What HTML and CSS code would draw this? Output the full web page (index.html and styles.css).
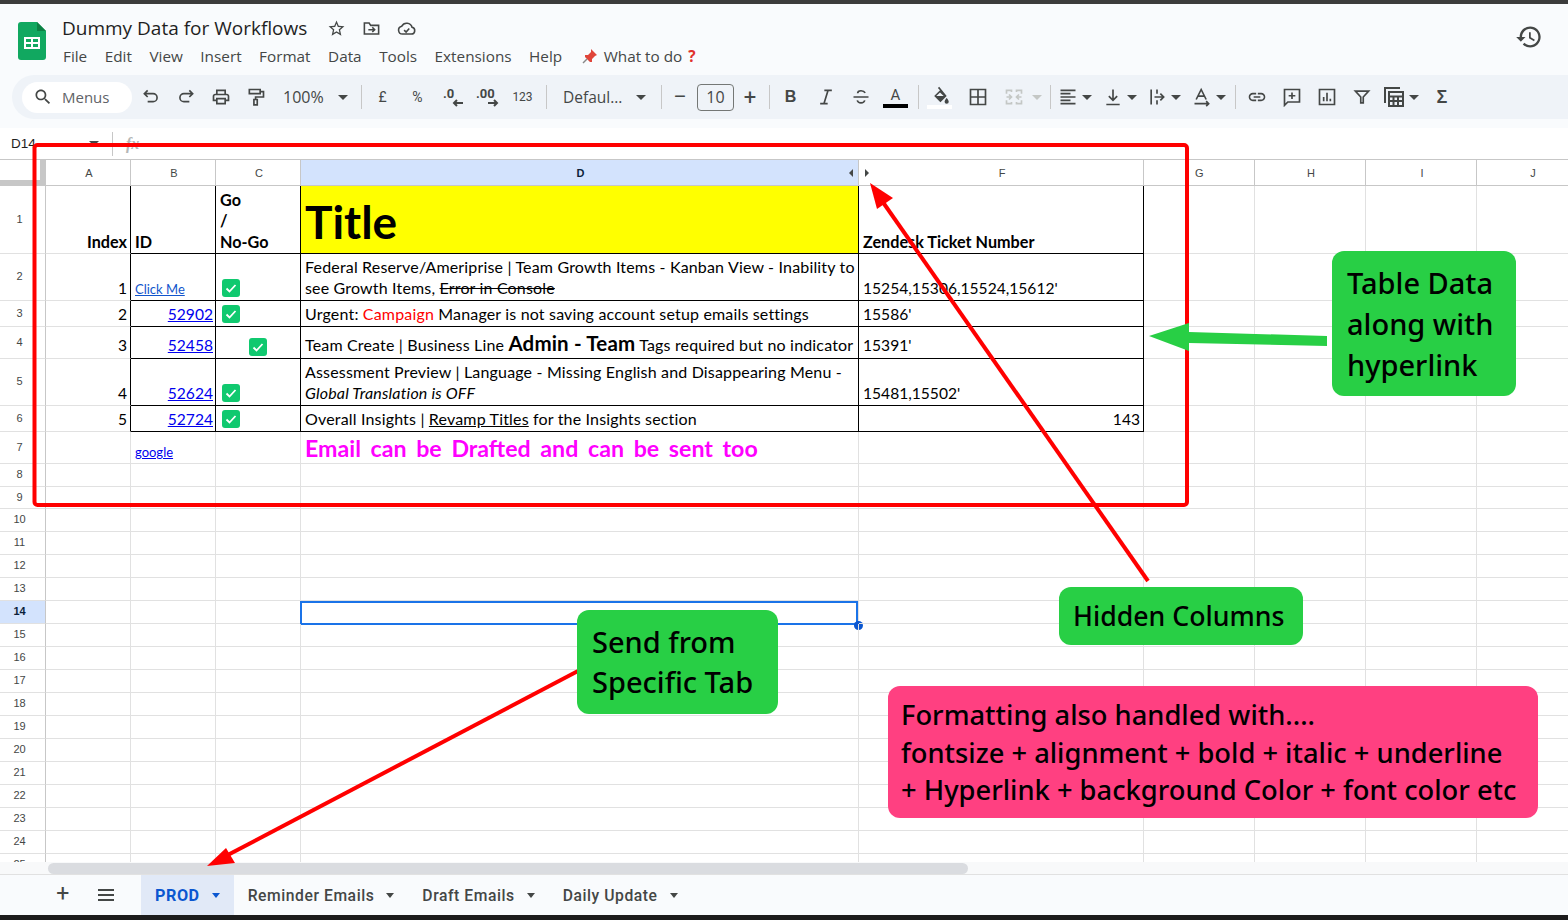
FILE: index.html
```html
<!DOCTYPE html>
<html lang="en">
<head>
    <meta charset="UTF-8">
    <title>Dummy Data for Workflows</title>
    <link rel="stylesheet" href="styles.css">
</head>
<body>
<div class="page">
    <div class="topband"></div>

    <header class="docbar">
        <svg class="logo" viewBox="0 0 28 38"><path d="M3 0h16l9 9v26a3 3 0 0 1-3 3H3a3 3 0 0 1-3-3V3a3 3 0 0 1 3-3z" fill="#11a860"/><path d="M19 0l9 9h-9z" fill="#0c8043"/><path d="M6 15h16v12H6zM8 17v3h5v-3zM15 17v3h5v-3zM8 22v3h5v-3zM15 22v3h5v-3z" fill="#fff" fill-rule="evenodd"/></svg>
        <div class="docinfo">
            <div class="docname">
                <span class="title">Dummy Data for Workflows</span>
                <svg class="ic16 star" viewBox="0 0 24 24"><path d="M22 9.24l-7.19-.62L12 2 9.19 8.63 2 9.24l5.46 4.73L5.82 21 12 17.27 18.18 21l-1.63-7.03L22 9.24zM12 15.4l-3.76 2.27 1-4.28-3.32-2.88 4.38-.38L12 6.1l1.71 4.04 4.38.38-3.32 2.88 1 4.28L12 15.4z"/></svg>
                <svg class="ic16 line" viewBox="0 0 24 24"><path d="M3 19V5h6l2 3h10v11zM8 13.5h8M13 10.5l3 3-3 3"/></svg>
                <svg class="ic16 line" viewBox="0 0 24 24"><path d="M7 19a5 5 0 0 1-1-9.9 7 7 0 0 1 13 1.4 4.3 4.3 0 0 1-1 8.5zM9 14l2.5 2.5L15.5 12"/></svg>
            </div>
            <nav class="menus">
                <span>File</span><span>Edit</span><span>View</span><span>Insert</span><span>Format</span><span>Data</span><span>Tools</span><span>Extensions</span><span>Help</span>
                <span class="todo"><svg class="pin" viewBox="0 0 16 16"><path d="M9 1l6 6-2 1-3 3 0 3-2 0-5-5 0-2 3 0 3-3z" fill="#e0453a"/><path d="M5 11l-4 4" stroke="#888" stroke-width="1.5"/></svg>What to do <b class="qmark">?</b></span>
            </nav>
        </div>
        <svg class="history" viewBox="0 0 24 24"><path d="M13 3c-4.97 0-9 4.03-9 9H1l3.89 3.89.07.14L9 12H6c0-3.87 3.13-7 7-7s7 3.13 7 7-3.13 7-7 7c-1.93 0-3.68-.79-4.94-2.06l-1.42 1.42C8.27 19.99 10.51 21 13 21c4.97 0 9-4.03 9-9s-4.03-9-9-9zm-1 5v5l4.28 2.54.72-1.21-3.5-2.08V8H12z"/></svg>
    </header>

    <div class="toolbar">
        <div class="search">
            <svg class="ic20 fill" viewBox="0 0 24 24"><path d="M15.5 14h-.79l-.28-.27C15.41 12.59 16 11.11 16 9.5 16 5.91 13.09 3 9.5 3S3 5.91 3 9.5 5.91 16 9.5 16c1.61 0 3.09-.59 4.23-1.57l.27.28v.79l5 4.99L20.49 19l-4.99-5zm-6 0C7.01 14 5 11.99 5 9.5S7.01 5 9.5 5 14 7.01 14 9.5 11.99 14 9.5 14z"/></svg>
            <span>Menus</span>
        </div>
        <span class="tool first"><svg class="ic20 line" viewBox="0 0 24 24"><path d="M8 4L4 8l4 4M4 8h10.5a4.8 4.8 0 0 1 0 9.6H8"/></svg></span>
        <span class="tool"><svg class="ic20 line" viewBox="0 0 24 24"><path d="M16 4l4 4-4 4M20 8H9.5a4.8 4.8 0 0 0 0 9.6H16"/></svg></span>
        <span class="tool"><svg class="ic20 fill" viewBox="0 0 24 24"><path d="M19 8h-1V3H6v5H5c-1.66 0-3 1.34-3 3v6h4v4h12v-4h4v-6c0-1.66-1.34-3-3-3zM8 5h8v3H8V5zm8 12v2H8v-4h8v2zm2-2v-2H6v2H4v-4c0-.55.45-1 1-1h14c.55 0 1 .45 1 1v4h-2z"/></svg></span>
        <span class="tool"><svg class="ic20 line" viewBox="0 0 24 24"><path d="M4 3h13v5H4zM17 5.5h4V12h-9.5v3M9.5 15h4v6.5h-4z"/></svg></span>
        <span class="tool zoomval">100%</span>
        <i class="caret wide"></i>
        <i class="sep"></i>
        <span class="tool txt">£</span>
        <span class="tool txt">%</span>
        <span class="tool"><svg class="ic22" viewBox="0 0 24 24"><text x="2" y="13" class="dec">.0</text><path class="arr" d="M22 18H13M16 15l-3 3 3 3"/></svg></span>
        <span class="tool"><svg class="ic22" viewBox="0 0 24 24"><text x="0" y="13" class="dec">.00</text><path class="arr" d="M12 18h9M18 15l3 3-3 3"/></svg></span>
        <span class="tool txt small">123</span>
        <i class="sep"></i>
        <span class="fontname">Defaul...</span>
        <i class="caret wide more"></i>
        <i class="sep"></i>
        <span class="tool pm">&#8211;</span>
        <span class="sizebox">10</span>
        <span class="tool pm plus">+</span>
        <i class="sep"></i>
        <span class="tool tb-bold">B</span>
        <span class="tool"><svg class="ic20 line" viewBox="0 0 24 24"><path d="M10 4h9M5 20h9M14.5 4l-5 16"/></svg></span>
        <span class="tool"><svg class="ic20 line" viewBox="0 0 24 24"><path d="M3 12h18M17 7c-1-2-3-2.5-5-2.5S8 5.5 8 7.5M7.5 16c.5 2 2.5 3 4.5 3s4-1 4.5-3"/></svg></span>
        <span class="tool colorbtn textcolor">A<i class="bar black"></i></span>
        <i class="sep"></i>
        <span class="tool colorbtn fillbtn"><svg class="ic20 fill" viewBox="0 0 24 24"><path d="M11 1L9.5 2.5 12 5l-7 7 7.500 7.500L20 12zM12 7.8L16.500 12h-9zM20 14.500s-2.500 2.700-2.500 4.300a2.500 2.500 0 0 0 5 0c0-1.600-2.500-4.300-2.500-4.300z"/></svg><i class="bar white"></i></span>
        <span class="tool"><svg class="ic20 line" viewBox="0 0 24 24"><path d="M3 3h18v18H3zM12 3v18M3 12h18"/></svg></span>
        <span class="tool merge"><svg class="ic20 line off" viewBox="0 0 24 24"><path d="M3 8V4h6v2M15 6V4h6v4M3 16v4h6v-2M15 18v2h6v-4M3 12h6M6 9l3 3-3 3M21 12h-6M18 9l-3 3 3 3"/></svg></span>
        <i class="caret off"></i>
        <i class="sep"></i>
        <span class="tool tight"><svg class="ic20 line" viewBox="0 0 24 24"><path d="M3 4h18M3 8h12M3 12h18M3 16h12M3 20h18"/></svg></span>
        <i class="caret"></i>
        <span class="tool tight"><svg class="ic20 line" viewBox="0 0 24 24"><path d="M12 3v13M7 11l5 5 5-5M4 21h16"/></svg></span>
        <i class="caret"></i>
        <span class="tool tight"><svg class="ic20 line" viewBox="0 0 24 24"><path d="M5 3v18M12 3v5M12 16v5M9 12h11M16 8l4 4-4 4"/></svg></span>
        <i class="caret"></i>
        <span class="tool tight"><svg class="ic20 line" viewBox="0 0 24 24"><path d="M5 15L11 3l6 12M7.5 11h7M3 20h16M17 17l3 3-3 3"/></svg></span>
        <i class="caret"></i>
        <i class="sep"></i>
        <span class="tool"><svg class="ic20 fill" viewBox="0 0 24 24"><path d="M3.9 12c0-1.71 1.39-3.1 3.1-3.1h4V7H7c-2.76 0-5 2.24-5 5s2.24 5 5 5h4v-1.9H7c-1.71 0-3.1-1.39-3.1-3.1zM8 13h8v-2H8v2zm9-6h-4v1.9h4c1.71 0 3.1 1.39 3.1 3.1s-1.39 3.1-3.1 3.1h-4V17h4c2.76 0 5-2.24 5-5s-2.24-5-5-5z"/></svg></span>
        <span class="tool"><svg class="ic20 line" viewBox="0 0 24 24"><path d="M3 3h18v15H7l-4 4zM12 6.5v8M8 10.5h8"/></svg></span>
        <span class="tool"><svg class="ic20 line" viewBox="0 0 24 24"><path d="M3 3h18v18H3zM8 17v-5M12 17V7M16 17v-3"/></svg></span>
        <span class="tool"><svg class="ic20 line" viewBox="0 0 24 24"><path d="M4 5h16l-6.5 7v7h-3v-7z"/></svg></span>
        <span class="tool calc"><svg class="ic22 line" viewBox="0 0 24 24"><path d="M3 18V3h15M7 7h14v14H7zM7 11.5h14M7 16h14M11.5 11.5V21M16 11.5V21"/></svg></span>
        <i class="caret"></i>
        <span class="tool sigma">&#931;</span>
    </div>

    <div class="formula">
        <span class="cellref">D14</span>
        <i class="caret"></i>
        <i class="sep"></i>
        <span class="fx">fx</span>
    </div>

    <div class="sheet">
        <table class="grid">
            <colgroup><col class="c-row"><col class="c-a"><col class="c-a"><col class="c-a"><col class="c-d"><col class="c-f"><col class="c-g"><col class="c-g"><col class="c-g"><col class="c-g"></colgroup>
            <tr class="heads">
                <th class="corner"></th><th>A</th><th>B</th><th>C</th>
                <th class="active">D<i class="hid left"></i></th>
                <th>F<i class="hid right"></i></th>
                <th class="gcol">G</th><th>H</th><th>I</th><th>J</th>
            </tr>
            <tr class="h68">
                <th>1</th>
                <td class="blk-r num head">Index</td>
                <td class="blk head">ID</td>
                <td class="blk head">Go<br>/<br>No-Go</td>
                <td class="blk yellow"><span class="bigtitle">Title</span></td>
                <td class="blk head">Zendesk Ticket Number</td>
                <td></td><td></td><td></td><td></td>
            </tr>
            <tr class="h47">
                <th>2</th>
                <td class="blk-r num">1</td>
                <td class="blk"><a class="smalllink" href="#">Click Me</a></td>
                <td class="blk chk"><svg class="check" viewBox="0 0 18 18"><rect width="18" height="18" rx="3"/><path d="M4.5 9.5l3 3 6-6.5"/></svg></td>
                <td class="blk desc">Federal Reserve/Ameriprise | Team Growth Items - Kanban View - Inability to<br>see Growth Items, <s>Error in Console</s></td>
                <td class="blk">15254,15306,15524,15612'</td>
                <td></td><td></td><td></td><td></td>
            </tr>
            <tr class="h26">
                <th>3</th>
                <td class="blk-r num">2</td>
                <td class="blk num"><a href="#">52902</a></td>
                <td class="blk chk"><svg class="check" viewBox="0 0 18 18"><rect width="18" height="18" rx="3"/><path d="M4.5 9.5l3 3 6-6.5"/></svg></td>
                <td class="blk desc">Urgent: <span class="red">Campaign</span> Manager is not saving account setup emails settings</td>
                <td class="blk">15586'</td>
                <td></td><td></td><td></td><td></td>
            </tr>
            <tr class="h32 raised">
                <th>4</th>
                <td class="blk-r num">3</td>
                <td class="blk num"><a href="#">52458</a></td>
                <td class="blk chk mid"><svg class="check" viewBox="0 0 18 18"><rect width="18" height="18" rx="3"/><path d="M4.5 9.5l3 3 6-6.5"/></svg></td>
                <td class="blk desc">Team Create | Business Line <b class="admin">Admin - Team</b> Tags required but no indicator</td>
                <td class="blk">15391'</td>
                <td></td><td></td><td></td><td></td>
            </tr>
            <tr class="h47">
                <th>5</th>
                <td class="blk-r num">4</td>
                <td class="blk num"><a href="#">52624</a></td>
                <td class="blk chk"><svg class="check" viewBox="0 0 18 18"><rect width="18" height="18" rx="3"/><path d="M4.5 9.5l3 3 6-6.5"/></svg></td>
                <td class="blk desc">Assessment Preview | Language - Missing English and Disappearing Menu -<br><em>Global Translation is OFF</em></td>
                <td class="blk">15481,15502'</td>
                <td></td><td></td><td></td><td></td>
            </tr>
            <tr class="h26">
                <th>6</th>
                <td class="blk-r num">5</td>
                <td class="blk num"><a href="#">52724</a></td>
                <td class="blk chk"><svg class="check" viewBox="0 0 18 18"><rect width="18" height="18" rx="3"/><path d="M4.5 9.5l3 3 6-6.5"/></svg></td>
                <td class="blk desc">Overall Insights | <u>Revamp Titles</u> for the Insights section</td>
                <td class="blk num">143</td>
                <td></td><td></td><td></td><td></td>
            </tr>
            <tr class="h32">
                <th>7</th><td></td>
                <td><a class="smalllink dark" href="#">google</a></td>
                <td></td>
                <td><span class="email">Email can be Drafted and can be sent too</span></td>
                <td></td><td></td><td></td><td></td><td></td>
            </tr>
            <tr><th>8</th><td></td><td></td><td></td><td></td><td></td><td></td><td></td><td></td><td></td></tr>
            <tr class="h22"><th>9</th><td></td><td></td><td></td><td></td><td></td><td></td><td></td><td></td><td></td></tr>
            <tr><th>10</th><td></td><td></td><td></td><td></td><td></td><td></td><td></td><td></td><td></td></tr>
            <tr><th>11</th><td></td><td></td><td></td><td></td><td></td><td></td><td></td><td></td><td></td></tr>
            <tr><th>12</th><td></td><td></td><td></td><td></td><td></td><td></td><td></td><td></td><td></td></tr>
            <tr><th>13</th><td></td><td></td><td></td><td></td><td></td><td></td><td></td><td></td><td></td></tr>
            <tr><th class="active">14</th><td></td><td></td><td></td><td class="selected"><i class="selbox"></i><i class="handle"></i></td><td></td><td></td><td></td><td></td><td></td></tr>
            <tr><th>15</th><td></td><td></td><td></td><td></td><td></td><td></td><td></td><td></td><td></td></tr>
            <tr><th>16</th><td></td><td></td><td></td><td></td><td></td><td></td><td></td><td></td><td></td></tr>
            <tr><th>17</th><td></td><td></td><td></td><td></td><td></td><td></td><td></td><td></td><td></td></tr>
            <tr><th>18</th><td></td><td></td><td></td><td></td><td></td><td></td><td></td><td></td><td></td></tr>
            <tr><th>19</th><td></td><td></td><td></td><td></td><td></td><td></td><td></td><td></td><td></td></tr>
            <tr><th>20</th><td></td><td></td><td></td><td></td><td></td><td></td><td></td><td></td><td></td></tr>
            <tr><th>21</th><td></td><td></td><td></td><td></td><td></td><td></td><td></td><td></td><td></td></tr>
            <tr><th>22</th><td></td><td></td><td></td><td></td><td></td><td></td><td></td><td></td><td></td></tr>
            <tr><th>23</th><td></td><td></td><td></td><td></td><td></td><td></td><td></td><td></td><td></td></tr>
            <tr><th>24</th><td></td><td></td><td></td><td></td><td></td><td></td><td></td><td></td><td></td></tr>
            <tr><th>25</th><td></td><td></td><td></td><td></td><td></td><td></td><td></td><td></td><td></td></tr>
        </table>
    </div>

    <div class="hscroll"><div class="thumb"></div></div>

    <div class="tabs">
        <span class="addsheet">+</span>
        <svg class="allsheets" viewBox="0 0 16 12"><path d="M0 1h16M0 6h16M0 11h16"/></svg>
        <div class="tab current">PROD<i class="caret"></i></div>
        <div class="tab">Reminder Emails<i class="caret"></i></div>
        <div class="tab">Draft Emails<i class="caret"></i></div>
        <div class="tab">Daily Update<i class="caret"></i></div>
    </div>
    <div class="bottomband"></div>

    <!-- annotations drawn on top of the screenshot -->
    <svg class="marks" viewBox="0 0 1568 920">
        <rect x="34.5" y="145" width="1152.5" height="360" rx="3" fill="none" stroke="#ff0000" stroke-width="4"/>
        <path d="M1148 581L880 198" stroke="#ff0000" stroke-width="4" fill="none"/>
        <polygon points="870,183 893,198 877,209" fill="#ff0000"/>
        <path d="M578 671L222 858" stroke="#ff0000" stroke-width="4" fill="none"/>
        <polygon points="207,866 226,848 235,863" fill="#ff0000"/>
        <polygon points="1149,336 1189,323 1189,332 1327,336 1327,346 1189,343 1189,351" fill="#28cf45"/>
    </svg>
    <div class="note green note-table">Table Data<br>along with<br>hyperlink</div>
    <div class="note green note-hidden">Hidden Columns</div>
    <div class="note green note-send">Send from<br>Specific Tab</div>
    <div class="note pink note-format">Formatting also handled with....<br>fontsize + alignment + bold + italic + underline<br>+ Hyperlink + background Color + font color etc</div>
</div>
</body>
</html>
```
FILE: styles.css
```css
* {
    box-sizing: border-box;
}

body {
    margin: 0;
    background: #fff;
    font-family: "Roboto", sans-serif;
    color: #444746;
}

.page {
    position: relative;
    width: 1568px;
    height: 920px;
    overflow: hidden;
    display: flex;
    flex-direction: column;
    background: #f9fbfd;
}

.topband {
    height: 4px;
    background: #3c3c3c;
}

/* title and menus */
.docbar {
    height: 71px;
    display: flex;
    padding: 10px 25px 0 18px;
}

.logo {
    width: 28px;
    height: 38px;
    margin-top: 8px;
}

.docinfo {
    flex: 1;
    margin-left: 16px;
}

.docname {
    display: flex;
    align-items: center;
    height: 28px;
}

.title {
    font-family: "Open Sans", sans-serif;
    font-size: 19px;
    color: #1f1f1f;
    margin-right: 20px;
}

.ic16 {
    width: 19px;
    height: 19px;
    margin-right: 16px;
}

.star {
    fill: #444746;
}

.line {
    fill: none;
    stroke: #444746;
    stroke-width: 2;
}

.fill {
    fill: #444746;
}

.menus {
    display: flex;
    gap: 17.5px;
    margin-top: 4px;
    margin-left: 1px;
    color: #444746;
    font-family: "Open Sans", sans-serif;
    font-size: 15.3px;
}

.todo {
    display: flex;
    align-items: center;
    margin-left: 2px;
}

.pin {
    width: 16px;
    height: 16px;
    margin-right: 6px;
}

.qmark {
    color: #e0322b;
    margin-left: 6px;
}

.history {
    width: 28px;
    height: 28px;
    fill: #444746;
    margin-top: 9px;
}

/* toolbar */
.toolbar {
    height: 44px;
    margin-left: 12px;
    padding-left: 10px;
    display: flex;
    align-items: center;
    background: #eff3f8;
    border-radius: 22px 0 0 22px;
}

.search {
    width: 110px;
    height: 31px;
    flex: none;
    display: flex;
    align-items: center;
    gap: 9px;
    padding-left: 11px;
    background: #fff;
    border-radius: 16px;
    font-family: "Open Sans", sans-serif;
    font-size: 15px;
    color: #5f6368;
}

.tool {
    width: 35px;
    height: 30px;
    flex: none;
    display: flex;
    align-items: center;
    justify-content: center;
    position: relative;
}

.tool.first {
    margin-left: 1.5px;
}

.tool.tight {
    width: 28px;
}

.tool.calc {
    width: 30px;
}

.tool.merge {
    margin-left: 1px;
}

.ic20 {
    width: 20px;
    height: 20px;
}

.ic22 {
    width: 24px;
    height: 24px;
}

.dec {
    font: 700 13px "Roboto", sans-serif;
    fill: #444746;
}

.arr {
    fill: none;
    stroke: #444746;
    stroke-width: 2;
}

.tool.zoomval {
    width: 64px;
    justify-content: flex-start;
    padding-left: 9.5px;
    font-family: "Open Sans", sans-serif;
    font-size: 16px;
}

.txt {
    font-size: 14px;
}

.tool.small {
    font-size: 12px;
    margin-right: 3px;
}

.caret {
    width: 0;
    height: 0;
    flex: none;
    border-left: 5px solid transparent;
    border-right: 5px solid transparent;
    border-top: 5px solid #444746;
}

.caret.wide {
    margin-right: 10.5px;
}

.caret.more {
    margin-right: 12px;
}

.caret.off {
    border-top-color: #c4c7c5;
    margin: 0 5px 0 1px;
}

.tight + .caret {
    margin-right: 6.5px;
}

.sep {
    width: 1px;
    height: 24px;
    flex: none;
    background: #c7c7c7;
    margin: 0 3px;
}

.fontname {
    width: 73px;
    margin-left: 13px;
    flex: none;
    font-family: "Open Sans", sans-serif;
    font-size: 15.5px;
    white-space: nowrap;
}

.tool.pm {
    width: 30px;
    font-size: 20px;
}

.tool.plus {
    width: 32px;
    font-size: 22px;
}

.sizebox {
    width: 37px;
    height: 27px;
    flex: none;
    display: flex;
    align-items: center;
    justify-content: center;
    margin-left: 2px;
    border: 1px solid #747775;
    border-radius: 4px;
    font-family: "Open Sans", sans-serif;
    font-size: 16px;
}

.tb-bold {
    font: 700 16px "Liberation Sans", sans-serif;
}

.colorbtn {
    flex-direction: column;
    font-size: 15px;
    line-height: 17px;
}

.textcolor {
    margin-right: 2px;
}

.bar {
    width: 25px;
    height: 4px;
    display: block;
}

.bar.black {
    background: #000;
}

.bar.white {
    background: #fff;
}

.fillbtn {
    margin-right: 3px;
}

.fillbtn .ic20 {
    margin-bottom: -1px;
}

.line.off {
    stroke: #c4c7c5;
}

.tool.sigma {
    font: 700 18px "Liberation Sans", sans-serif;
    width: 26px;
    margin-left: 10px;
}

/* formula bar */
.formula {
    height: 32px;
    margin-top: 9px;
    padding-left: 11px;
    display: flex;
    align-items: center;
    background: #fff;
    font-family: "Liberation Sans", sans-serif;
    font-size: 13.5px;
    color: #1f1f1f;
    border-bottom: 1px solid #c7c7c7;
}

.cellref {
    width: 78px;
}

.formula .caret {
    margin-right: 10px;
}

.fx {
    font: italic 700 16px "Liberation Serif", serif;
    color: #b4b7b7;
    margin-left: 10px;
}

/* sheet */
.sheet {
    height: 702px;
    flex: none;
    overflow: hidden;
    background: #fff;
}

.grid {
    table-layout: fixed;
    border-collapse: separate;
    border-spacing: 0;
    width: 1587px;
    font-family: "Lato", sans-serif;
    font-size: 15.6px;
    line-height: 21px;
    color: #000;
}

.c-row { width: 46px; }
.c-a { width: 85px; }
.c-d { width: 558px; }
.c-f { width: 285px; }
.c-g { width: 111px; }

.grid tr {
    height: 23px;
}

.grid td {
    padding: 0 3px 1px 4px;
    vertical-align: bottom;
    white-space: nowrap;
    border-right: 1px solid #e1e1e1;
    border-bottom: 1px solid #e1e1e1;
    position: relative;
}

.grid th {
    padding: 0 6px 2px 0;
    font: 400 11px "Liberation Sans", sans-serif;
    color: #444746;
    border-right: 1px solid #c7c7c7;
    border-bottom: 1px solid #e1e1e1;
}

.grid tr.heads {
    height: 26px;
}

.grid .heads th {
    position: relative;
    padding: 0 0 0 2px;
    border-right-color: #c7c7c7;
    border-bottom-color: #c7c7c7;
}

.grid .heads .gcol {
    text-align: left;
    padding-left: 51px;
}

.grid .heads .corner {
    background: linear-gradient(#c7c7c7, #c7c7c7) right 0 top 0 / 5px 100% no-repeat,
                linear-gradient(#c7c7c7, #c7c7c7) 0 bottom / 100% 5px no-repeat;
}

.grid th.active {
    background: #d3e3fd;
    color: #0b1f3a;
    font-weight: 700;
}

.grid tr.h68 { height: 68px; }
.grid tr.h47 { height: 47px; }
.grid tr.h32 { height: 32px; }
.grid tr.h26 { height: 26px; }
.grid tr.h22 { height: 22px; }

.grid .raised td {
    padding-bottom: 2px;
}

.grid .blk {
    border-right: 1px solid #000;
    border-bottom: 1px solid #000;
}

.grid .blk-r {
    border-right: 1px solid #000;
}

.num {
    text-align: right;
}

.num a {
    margin-right: -1px;
}

.head {
    font-weight: 700;
    font-size: 16.2px;
}

.grid .desc {
    font-size: 16px;
    letter-spacing: .17px;
    padding-bottom: 2px;
}

.grid .raised .desc {
    padding-bottom: 3px;
}

.yellow {
    background: #ffff00;
}

.bigtitle {
    font-size: 46px;
    font-weight: 700;
    line-height: 60px;
}

.grid a {
    color: #0000ee;
    text-decoration: underline;
}

.grid a.smalllink {
    display: inline-block;
    font-size: 13px;
    line-height: 17px;
    color: #1155cc;
}

.grid a.dark {
    color: #0000ee;
}

.red {
    color: #ff0000;
}

.admin {
    font-size: 20.5px;
}

.email {
    font-family: "Lato", sans-serif;
    font-weight: 700;
    font-size: 23.2px;
    word-spacing: 4px;
    color: #ff00ff;
    line-height: 26px;
}

.grid .chk {
    padding-left: 6px;
    padding-bottom: 3px;
    line-height: 0;
}

.grid .chk.mid {
    padding-left: 33px;
}

.check {
    display: block;
    width: 18px;
    height: 18px;
    fill: #10c96f;
}

.check path {
    fill: none;
    stroke: #fff;
    stroke-width: 1.8;
}

.hid {
    position: absolute;
    top: 9px;
    width: 0;
    height: 0;
    border-top: 4px solid transparent;
    border-bottom: 4px solid transparent;
}

.hid.left {
    right: 5px;
    border-right: 4px solid #444746;
}

.hid.right {
    left: 6px;
    border-left: 4px solid #444746;
}

.selbox {
    position: absolute;
    left: -1px;
    top: 0;
    right: 0;
    bottom: -2px;
    border: 2px solid #1a73e8;
}

.handle {
    position: absolute;
    right: -5px;
    bottom: -6.5px;
    width: 9px;
    height: 9px;
    border-radius: 50%;
    background: #0b57d0;
}

/* scrollbar and tabs */
.hscroll {
    height: 13px;
    flex: none;
    padding-left: 48px;
    background: #f8f9fa;
    border-bottom: 1px solid #e1e1e1;
}

.thumb {
    width: 920px;
    height: 11px;
    border-radius: 6px;
    background: #dadce0;
    margin-top: 1px;
}

.tabs {
    height: 40px;
    flex: none;
    display: flex;
    align-items: stretch;
    padding-left: 55px;
    font-family: "Roboto", sans-serif;
    font-size: 15.7px;
    font-weight: 500;
    letter-spacing: .55px;
    color: #444746;
}

.addsheet {
    width: 16px;
    text-align: center;
    font-size: 23px;
    font-weight: 400;
    line-height: 38px;
}

.allsheets {
    width: 16px;
    height: 12px;
    margin: 14px 0 0 27px;
    fill: none;
    stroke: #444746;
    stroke-width: 2;
}

.tab {
    display: flex;
    align-items: center;
    gap: 12px;
    padding: 0 14px;
}

.tab .caret {
    border-left-width: 4px;
    border-right-width: 4px;
}

.tab.current {
    margin-left: 27px;
    background: #e1e9f7;
    color: #0b57d0;
    font-size: 16.2px;
    font-weight: 700;
}

.tab.current .caret {
    border-top-color: #0b57d0;
}

.bottomband {
    height: 5px;
    flex: none;
    background: #1c1c1c;
}

/* annotations */
.marks {
    position: absolute;
    left: 0;
    top: 0;
    width: 1568px;
    height: 920px;
    pointer-events: none;
}

.note {
    position: absolute;
    border-radius: 12px;
    font-family: "Noto Sans", sans-serif;
    font-weight: 500;
    color: #000;
    white-space: nowrap;
}

.green {
    background: #28cf45;
}

.pink {
    background: #ff4081;
}

.note-table {
    left: 1332px;
    top: 251px;
    width: 184px;
    height: 145px;
    padding: 11px 15px;
    font-size: 29px;
    line-height: 41px;
}

.note-hidden {
    left: 1059px;
    top: 587px;
    width: 244px;
    height: 58px;
    padding: 10px 14px;
    font-size: 26.7px;
    line-height: 38px;
}

.note-send {
    left: 577px;
    top: 610px;
    width: 201px;
    height: 104px;
    padding: 12px 15px;
    font-size: 29px;
    line-height: 40px;
}

.note-format {
    left: 888px;
    top: 686px;
    width: 650px;
    height: 132px;
    padding: 10px 13px;
    font-size: 27.3px;
    line-height: 37.5px;
}
```
